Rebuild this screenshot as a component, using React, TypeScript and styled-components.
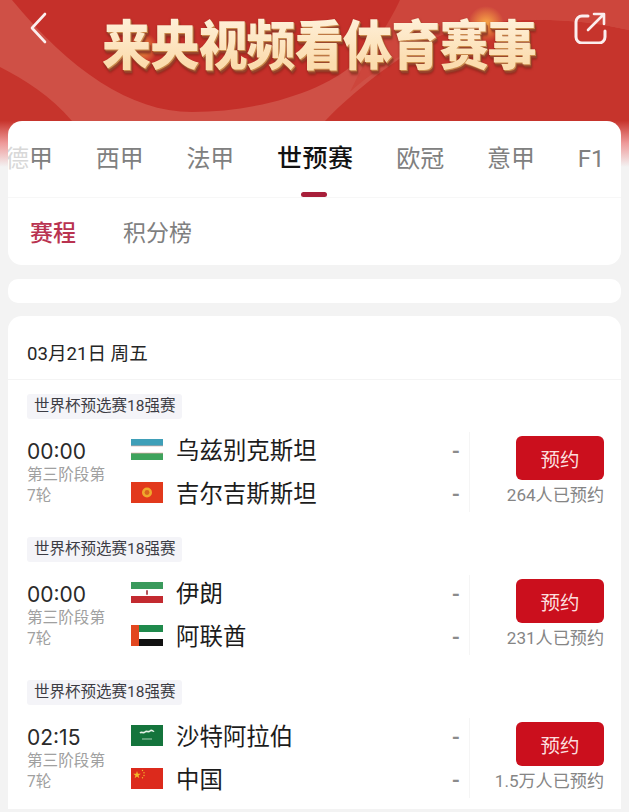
import React from 'react';
import styled, { createGlobalStyle } from 'styled-components';

const GlobalStyle = createGlobalStyle`
  html, body { margin: 0; padding: 0; background: #f3f3f3; }
  body { font-family: Roboto, "Noto Sans CJK SC", sans-serif; }
  * { box-sizing: border-box; }
`;

// --- Styled Components ---
const Page = styled.div` width: 629px; height: 812px; overflow: hidden; background: #f3f3f3; `;
const Hero = styled.header` position: relative; height: 121px; background: #c8352d; overflow: hidden; display: flex; justify-content: space-between; padding: 12px 22px 0 25px; `;
const HeroArt = styled.svg` position: absolute; left: 0; top: 0; width: 629px; height: 121px; `;
const HeroIcon = styled.svg` position: relative; flex: none; `;
const HeroTitle = styled.h1`
  position: absolute; left: 102px; top: 4px; margin: 0;
  font-family: "Noto Sans CJK SC", sans-serif; font-size: 49px; line-height: 76px; font-weight: 900;
  letter-spacing: -0.8px; white-space: nowrap;
  background: linear-gradient(#fff1da 20%, #fbdcae 75%);
  -webkit-background-clip: text; background-clip: text; color: transparent;
  transform: scaleY(1.1);
  filter: drop-shadow(1px 1px 0 #c98a4c) drop-shadow(1px 2px 0 #96402a) drop-shadow(0 1px 1px rgba(110, 25, 15, .6));
`;
const Body = styled.main` padding: 0 8px; background: linear-gradient(#c8352d 0, #e99 22px, #f3f3f3 46px, #f3f3f3 100%); background-repeat: no-repeat; `;
const TabCard = styled.section` background: #fff; border-radius: 14px; height: 144px; overflow: hidden; `;
const LeagueTabs = styled.nav` display: flex; align-items: flex-start; gap: 42.7px; height: 77px; margin-left: -3px; padding-top: 21px; border-bottom: 1px solid #f7f7f7; white-space: nowrap; `;
const LeagueTab = styled.div<{ $active?: boolean }>`
  position: relative; font-size: ${p => (p.$active ? '25px' : '24px')}; line-height: 34px; flex: none;
  color: ${p => (p.$active ? '#111' : '#808080')};
  font-weight: ${p => (p.$active ? 500 : 400)};
  letter-spacing: ${p => (p.$active ? '0.5px' : '0')};
  i { font-style: normal; color: #d8d8d8; }
  ${p => p.$active && `&::after { content: ''; position: absolute; left: 24px; bottom: -21px; width: 26px; height: 5px; border-radius: 3px; background: #a81f3a; }`}
`;
const SubTabs = styled.div` display: flex; gap: 47px; padding: 19px 0 0 22px; `;
const SubTab = styled.div<{ $active?: boolean }>` font-size: 23px; line-height: 34px; color: ${p => (p.$active ? '#b93350' : '#7f7f7f')}; font-weight: ${p => (p.$active ? 500 : 400)}; `;
const Banner = styled.div` height: 24px; margin-top: 14px; background: #fff; border-radius: 10px; `;
const ListCard = styled.section` margin-top: 13px; background: #fff; border-radius: 14px 14px 0 0; `;
const DateRow = styled.div` height: 64px; padding: 24px 0 0 19px; font-size: 18.6px; line-height: 28px; color: #262626; border-bottom: 1px solid #f4f4f4; `;
const MatchBlock = styled.article` height: 143px; padding: 14px 17px 0 19px; `;
const Tag = styled.div` display: inline-block; height: 25px; padding: 0 7px; font-size: 15.5px; line-height: 25px; color: #3c3c44; background: #f4f4f8; border-radius: 3px; white-space: nowrap; `;
const MatchRow = styled.div` display: grid; grid-template-columns: 104px 1fr 26px 135px; margin-top: 13px; height: 80px; `;
const TimeCol = styled.div` padding-top: 6px; `;
const Clock = styled.div` font-family: Inter, sans-serif; font-size: 21px; line-height: 27px; color: #2a2a2a; `;
const Stage = styled.div` font-size: 15.6px; line-height: 21px; color: #a0a0a0; width: 80px; `;
const Teams = styled.div` display: flex; flex-direction: column; gap: 9px; `;
const Team = styled.div` display: flex; align-items: center; gap: 13px; height: 34px; font-size: 23.4px; letter-spacing: 0.05px; color: #1c1c1c; `;
const Flag = styled.svg` width: 32px; height: 21px; flex: none; `;
const Scores = styled.div` display: flex; flex-direction: column; gap: 9px; align-items: center; color: #8b8b8b; font-size: 21px; font-weight: 700; `;
const Score = styled.div` height: 34px; line-height: 34px; padding-top: 2px; `;
const BookCol = styled.div` display: flex; flex-direction: column; align-items: flex-end; border-left: 1px solid #f5f5f5; padding-top: 4px; `;
const BookButton = styled.button` width: 88px; height: 44px; border: 0; border-radius: 6px; background: #cb0f1d; color: #fbdede; font: inherit; font-size: 19.5px; padding: 0; `;
const BookCount = styled.div` margin-top: 4px; font-size: 17.1px; line-height: 22px; color: #858585; white-space: nowrap; `;

const UzFlag = () => (
  <Flag viewBox="0 0 32 21">
    <rect width="32" height="7" fill="#3f9fb8" />
    <rect y="7" width="32" height="7" fill="#fff" />
    <rect y="14" width="32" height="7" fill="#3fa35c" />
    <rect y="6.6" width="32" height="0.7" fill="#d9a7a0" />
    <rect y="13.7" width="32" height="0.7" fill="#d9a7a0" />
  </Flag>
);
const KgFlag = () => (
  <Flag viewBox="0 0 32 21">
    <rect width="32" height="21" fill="#e2391c" />
    <circle cx="16" cy="10.5" r="5" fill="#f0a92c" />
    <circle cx="16" cy="10.5" r="2.4" fill="#d9661f" />
  </Flag>
);
const IrFlag = () => (
  <Flag viewBox="0 0 32 21">
    <rect width="32" height="7" fill="#3a9a5c" />
    <rect y="7" width="32" height="7" fill="#fff" />
    <rect y="14" width="32" height="7" fill="#c32a30" />
    <rect x="15" y="8" width="2" height="5" rx="1" fill="#b5545a" />
  </Flag>
);
const AeFlag = () => (
  <Flag viewBox="0 0 32 21">
    <rect width="32" height="7" fill="#1f8a4c" />
    <rect y="7" width="32" height="7" fill="#fff" />
    <rect y="14" width="32" height="7" fill="#111" />
    <rect width="8" height="21" fill="#e2471f" />
  </Flag>
);
const SaFlag = () => (
  <Flag viewBox="0 0 32 21">
    <rect width="32" height="21" fill="#14743c" />
    <path d="M9 8c2-2 3 1 5-1s3 1 5-1 3 1 4 0" stroke="#e6f2e8" strokeWidth="1.6" fill="none" />
    <path d="M11 14h10" stroke="#cfe6d4" strokeWidth="0.8" />
  </Flag>
);
const CnFlag = () => (
  <Flag viewBox="0 0 32 21">
    <rect width="32" height="21" fill="#dc2a1c" />
    <polygon points="6,3 6.9,5.7 9.8,5.7 7.5,7.4 8.4,10.2 6,8.5 3.6,10.2 4.5,7.4 2.2,5.7 5.1,5.7" fill="#f2b92a" />
    <circle cx="11.5" cy="2.5" r="0.7" fill="#f2b92a" />
    <circle cx="13" cy="4.8" r="0.7" fill="#f2b92a" />
    <circle cx="13" cy="7.5" r="0.7" fill="#f2b92a" />
    <circle cx="11.5" cy="9.8" r="0.7" fill="#f2b92a" />
  </Flag>
);

const matches = [
  { time: '00:00', home: '乌兹别克斯坦', away: '吉尔吉斯斯坦', HomeFlag: UzFlag, AwayFlag: KgFlag, count: '264人已预约' },
  { time: '00:00', home: '伊朗', away: '阿联酋', HomeFlag: IrFlag, AwayFlag: AeFlag, count: '231人已预约' },
  { time: '02:15', home: '沙特阿拉伯', away: '中国', HomeFlag: SaFlag, AwayFlag: CnFlag, count: '1.5万人已预约' },
];

const App = () => {
  return (
    <Page>
      <GlobalStyle />
      <Hero>
        <HeroArt viewBox="0 0 629 121">
          <defs>
            <radialGradient id="glow">
              <stop offset="0" stopColor="#ffb347" stopOpacity="0.95" />
              <stop offset="1" stopColor="#ffb347" stopOpacity="0" />
            </radialGradient>
          </defs>
          <rect width="629" height="121" fill="#c6342c" />
          <path d="M0 0H629V30C560 14 480 16 430 40C385 65 345 100 325 121H72C50 95 25 80 0 67Z" fill="#cf5046" />
          <path d="M400 0H629V30C560 14 480 16 430 40C395 58 372 72 350 92C365 60 385 28 400 0Z" fill="#cd463c" />
          <path d="M12 0H400C388 25 375 45 360 58C330 90 260 112 192 112C130 112 70 70 12 0Z" fill="#c5302a" />
          <circle cx="142" cy="48" r="16" fill="url(#glow)" />
          <circle cx="486" cy="24" r="18" fill="url(#glow)" />
        </HeroArt>
        <HeroIcon width="24" height="32" viewBox="0 0 24 32" fill="none">
          <path d="M20 2L7 16l13 14" stroke="#fbeeee" strokeWidth="2.6" strokeLinecap="round" strokeLinejoin="round" />
        </HeroIcon>
        <HeroTitle>来央视频看体育赛事</HeroTitle>
        <HeroIcon width="34" height="32" viewBox="0 0 34 32" fill="none">
          <path d="M15 4H9a6 6 0 0 0-6 6v15a6 6 0 0 0 6 6h17a6 6 0 0 0 6-6v-6" stroke="#fbeeee" strokeWidth="3" strokeLinecap="round" />
          <path d="M15 18L30 3M21 2h10v10" stroke="#fbeeee" strokeWidth="2.6" strokeLinecap="round" strokeLinejoin="round" />
        </HeroIcon>
      </Hero>
      <Body>
        <TabCard>
          <LeagueTabs>
            <LeagueTab><i>德</i>甲</LeagueTab>
            <LeagueTab>西甲</LeagueTab>
            <LeagueTab>法甲</LeagueTab>
            <LeagueTab $active>世预赛</LeagueTab>
            <LeagueTab>欧冠</LeagueTab>
            <LeagueTab>意甲</LeagueTab>
            <LeagueTab>F1</LeagueTab>
          </LeagueTabs>
          <SubTabs>
            <SubTab $active>赛程</SubTab>
            <SubTab>积分榜</SubTab>
          </SubTabs>
        </TabCard>
        <Banner />
        <ListCard>
          <DateRow>03月21日 周五</DateRow>
          {matches.map((m, index) => (
            <MatchBlock key={index}>
              <Tag>世界杯预选赛18强赛</Tag>
              <MatchRow>
                <TimeCol>
                  <Clock>{m.time}</Clock>
                  <Stage>第三阶段第7轮</Stage>
                </TimeCol>
                <Teams>
                  <Team><m.HomeFlag />{m.home}</Team>
                  <Team><m.AwayFlag />{m.away}</Team>
                </Teams>
                <Scores>
                  <Score>-</Score>
                  <Score>-</Score>
                </Scores>
                <BookCol>
                  <BookButton>预约</BookButton>
                  <BookCount>{m.count}</BookCount>
                </BookCol>
              </MatchRow>
            </MatchBlock>
          ))}
        </ListCard>
      </Body>
    </Page>
  );
};

export default App;
